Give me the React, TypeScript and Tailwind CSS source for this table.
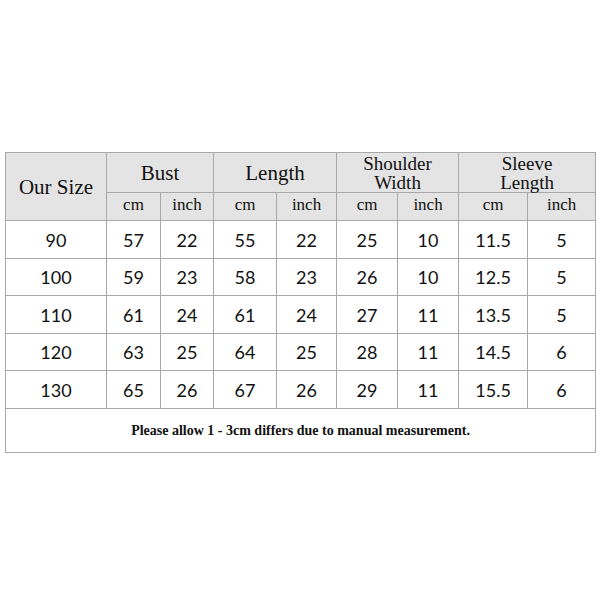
const cols = [101, 54, 53, 63, 60, 61, 61, 69, 68];

const rows = [
  ['90', '57', '22', '55', '22', '25', '10', '11.5', '5'],
  ['100', '59', '23', '58', '23', '26', '10', '12.5', '5'],
  ['110', '61', '24', '61', '24', '27', '11', '13.5', '5'],
  ['120', '63', '25', '64', '25', '28', '11', '14.5', '6'],
  ['130', '65', '26', '67', '26', '29', '11', '15.5', '6'],
];

const rowHeights = [38, 37, 38, 37, 38];

const serif = "font-['Liberation_Serif','Times_New_Roman',serif]";
const cell = 'border border-[#a8a8a8] text-center align-middle p-0';

export default function App() {
  return (
    <div className="w-[600px] h-[600px] bg-white pt-[152px] pl-[5px]">
      <table className="table-fixed border-collapse w-[590px] text-[#111]">
        <colgroup>
          {cols.map((w, i) => (
            <col key={i} style={{ width: w }} />
          ))}
        </colgroup>
        <thead className={`bg-[#e4e4e4] ${serif}`}>
          <tr className="h-[40px]">
            <th rowSpan={2} className={`${cell} text-[21px] font-normal leading-[24px]`}>
              Our Size
            </th>
            <th colSpan={2} className={`${cell} text-[21px] font-normal leading-[24px]`}>
              Bust
            </th>
            <th colSpan={2} className={`${cell} text-[21px] font-normal leading-[24px]`}>
              Length
            </th>
            <th colSpan={2} className={`${cell} text-[19px] font-normal leading-[19px]`}>
              <div>Shoulder</div>
              <div>Width</div>
            </th>
            <th colSpan={2} className={`${cell} text-[19px] font-normal leading-[19px]`}>
              <div>Sleeve</div>
              <div>Length</div>
            </th>
          </tr>
          <tr className="h-[28px]">
            {['cm', 'inch', 'cm', 'inch', 'cm', 'inch', 'cm', 'inch'].map((u, i) => (
              <th key={i} className={`${cell} text-[17px] font-normal leading-[20px] pb-[3px]`}>
                {u}
              </th>
            ))}
          </tr>
        </thead>
        <tbody className="font-['Lato','Noto_Sans',sans-serif] text-[18px] leading-[22px]">
          {rows.map((r, i) => (
            <tr key={i} style={{ height: rowHeights[i] }}>
              {r.map((v, j) => (
                <td key={j} className={cell}>
                  {v}
                </td>
              ))}
            </tr>
          ))}
          <tr className="h-[44px]">
            <td colSpan={9} className={`${cell} ${serif} text-[14px] font-bold`}>
              Please allow 1 - 3cm differs due to manual measurement.
            </td>
          </tr>
        </tbody>
      </table>
    </div>
  );
}
